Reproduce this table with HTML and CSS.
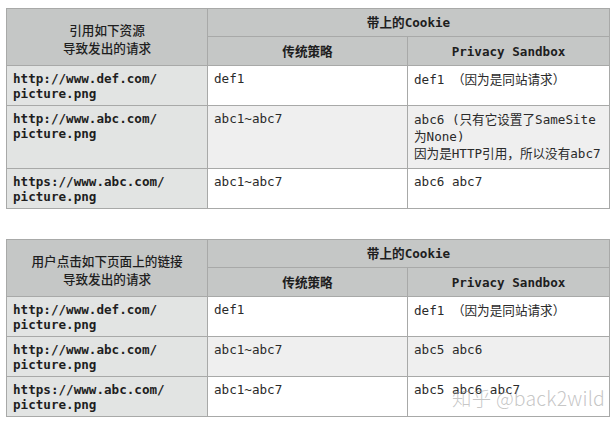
FILE: index.html
```html
<!DOCTYPE html>
<html lang="zh-CN">
<head>
<meta charset="utf-8">
<title>Cookie 对比</title>
<link rel="stylesheet" href="styles.css">
</head>
<body>
<div class="page">
  <table class="grid">
    <colgroup><col class="c1"><col class="c2"><col class="c3"></colgroup>
    <thead>
      <tr><th rowspan="2" class="corner">引用如下资源<br>导致发出的请求</th><th colspan="2" class="group">带上的Cookie</th></tr>
      <tr><th class="sub">传统策略</th><th class="sub">Privacy Sandbox</th></tr>
    </thead>
    <tbody>
      <tr><td class="url">http://www.def.com/<br>picture.png</td><td>def1</td><td class="cjk">def1 （因为是同站请求）</td></tr>
      <tr class="alt"><td class="url">http://www.abc.com/<br>picture.png</td><td>abc1~abc7</td><td class="cjk tall"><span class="ln">abc6 (只有它设置了SameSite</span><br><span class="ln">为None)</span><br><span class="ln">因为是HTTP引用，所以没有abc7</span></td></tr>
      <tr><td class="url">https://www.abc.com/<br>picture.png</td><td>abc1~abc7</td><td>abc6 abc7</td></tr>
    </tbody>
  </table>

  <table class="grid second">
    <colgroup><col class="c1"><col class="c2"><col class="c3"></colgroup>
    <thead>
      <tr><th rowspan="2" class="corner">用户点击如下页面上的链接<br>导致发出的请求</th><th colspan="2" class="group">带上的Cookie</th></tr>
      <tr><th class="sub">传统策略</th><th class="sub">Privacy Sandbox</th></tr>
    </thead>
    <tbody>
      <tr><td class="url">http://www.def.com/<br>picture.png</td><td>def1</td><td class="cjk">def1 （因为是同站请求）</td></tr>
      <tr class="alt"><td class="url">http://www.abc.com/<br>picture.png</td><td>abc1~abc7</td><td>abc5 abc6</td></tr>
      <tr><td class="url">https://www.abc.com/<br>picture.png</td><td>abc1~abc7</td><td>abc5 abc6 abc7</td></tr>
    </tbody>
  </table>

  <div class="watermark">知乎 @back2wild</div>
</div>
</body>
</html>
```

FILE: styles.css
```css
html, body {
  margin: 0;
  padding: 0;
  background: #ffffff;
}

.page {
  position: relative;
  width: 615px;
  height: 426px;
  padding: 8px 0 0 6px;
  box-sizing: border-box;
  font-family: "DejaVu Sans Mono", "Noto Sans CJK SC", monospace;
  font-size: 12.6px;
  color: #222;
}

.grid {
  border-collapse: collapse;
  table-layout: fixed;
  width: 603px;
}

.grid.second {
  margin-top: 30px;
}

.c1 { width: 201px; }
.c2 { width: 200px; }
.c3 { width: 202px; }

.grid th,
.grid td {
  border: 1px solid #a8a9a8;
}

.grid th {
  background: #c5c7c6;
  font-weight: bold;
  color: #1e1e1e;
  text-align: center;
  line-height: 17px;
  padding: 5px 6px;
  vertical-align: middle;
  font-family: "DejaVu Sans Mono", "Noto Sans CJK SC", monospace;
}

.grid th.sub {
  padding: 6px 6px 5px;
}

.grid th.corner {
  line-height: 18px;
  padding: 10px 6px 5px;
  font-weight: 500;
}

.grid td {
  vertical-align: top;
  padding: 5px 6px 4px;
  line-height: 15px;
  color: #2a2a2a;
  background: #ffffff;
}

.grid tr.alt td {
  background: #efefef;
}

.grid td.url,
.grid tr.alt td.url {
  background: #e2e4e3;
  font-weight: bold;
  color: #1e1e1e;
}

.grid td.cjk {
  line-height: 17px;
}

.grid td.tall {
  line-height: 17px;
  padding-bottom: 6px;
}

.ln {
  white-space: nowrap;
}

.watermark {
  position: absolute;
  left: 452px;
  top: 383px;
  font-family: "Noto Sans CJK SC", "Noto Sans", sans-serif;
  font-weight: 300;
  font-size: 19.5px;
  color: rgba(150, 150, 150, 0.55);
  white-space: nowrap;
  letter-spacing: 0.2px;
}
```
